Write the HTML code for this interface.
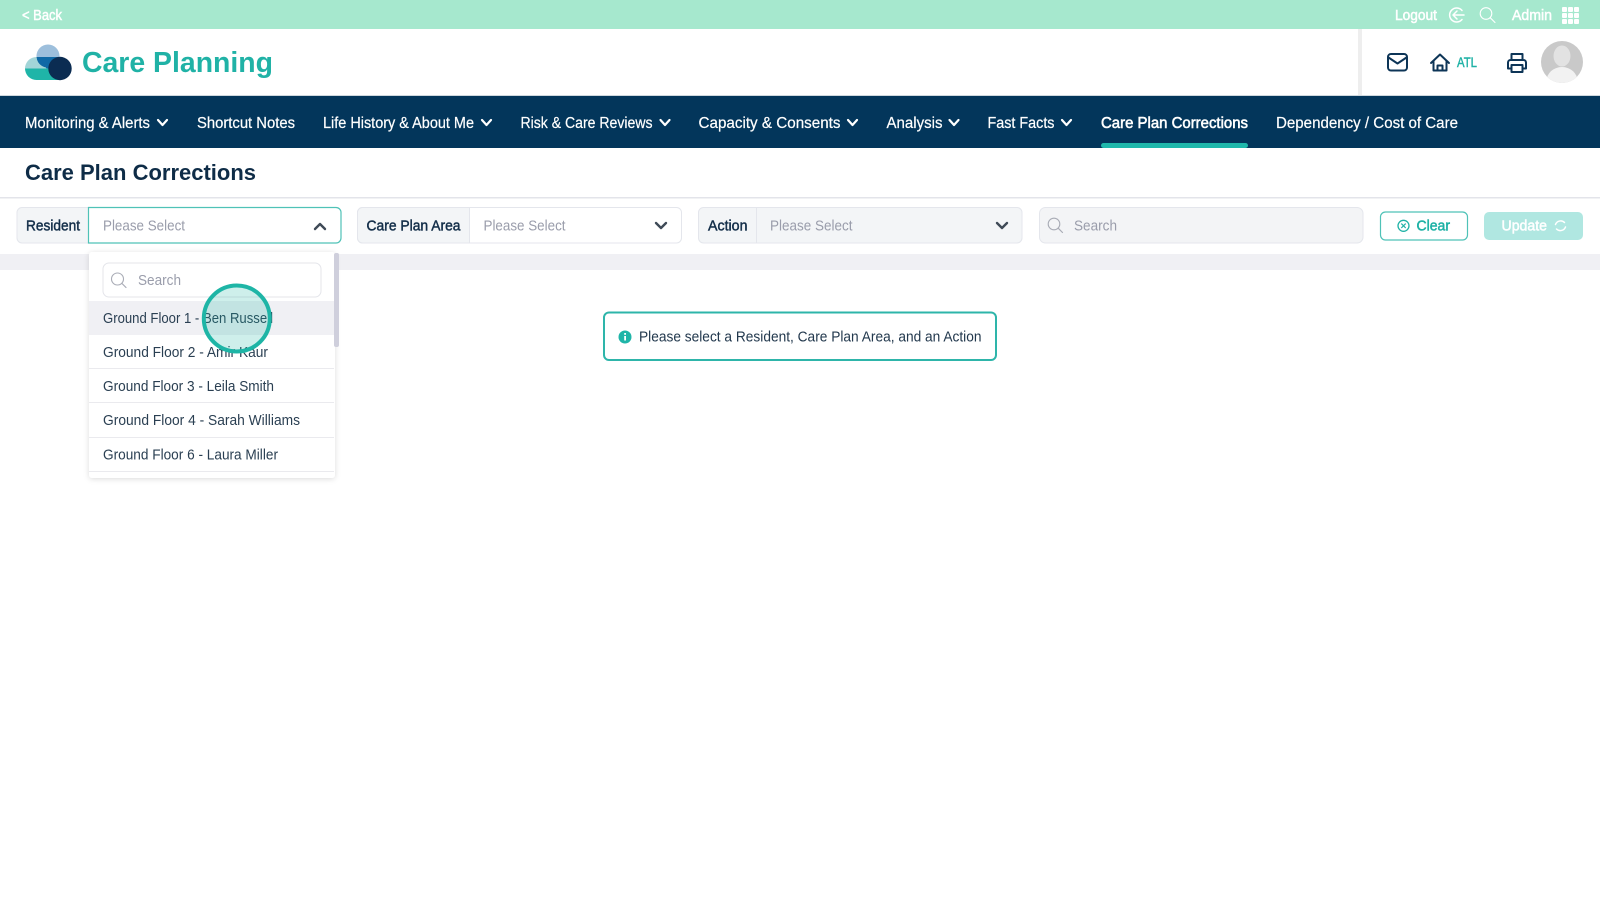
<!DOCTYPE html>
<html lang="en">
<head>
<meta charset="utf-8">
<title>Care Planning</title>
<style>
html,body{margin:0;padding:0;background:#fff;width:1600px;height:900px;overflow:hidden}
svg{display:block}
text{font-family:"Liberation Sans","DejaVu Sans",sans-serif}
</style>
</head>
<body>
<svg xmlns="http://www.w3.org/2000/svg" width="1600" height="900" viewBox="0 0 1600 900">
<defs>
<filter id="sh" x="-10%" y="-10%" width="120%" height="120%"><feDropShadow dx="0" dy="1" stdDeviation="3" flood-color="#000" flood-opacity=".14"/></filter>
<clipPath id="av"><circle cx="1562" cy="62" r="21"/></clipPath>
</defs>
<rect width="1600" height="900" fill="#fff"/>
<!-- top bar -->
<rect width="1600" height="29" fill="#a6e8ce"/>
<text x="22" y="20" font-size="14.500" fill="#fff" stroke="#fff" stroke-width=".5" textLength="40" lengthAdjust="spacingAndGlyphs">&lt; Back</text>
<text x="1395" y="20" font-size="14.500" fill="#fff" stroke="#fff" stroke-width=".5" textLength="42" lengthAdjust="spacingAndGlyphs">Logout</text>
<g fill="none" stroke="#fff" stroke-width="1.500" stroke-linecap="round" stroke-linejoin="round">
<path d="M1462 10.500A7 7 0 1 0 1462 19.500"/><path d="M1464 15H1453M1457 11L1453 15L1457 19"/>
</g>
<g fill="none" stroke="#fff" stroke-width="1.100" stroke-linecap="round">
<circle cx="1486" cy="13.500" r="5.800"/><path d="M1490.200 17.700L1495 22.500"/>
</g>
<text x="1512" y="20" font-size="14.500" fill="#fff" stroke="#fff" stroke-width=".5" textLength="40" lengthAdjust="spacingAndGlyphs">Admin</text>
<g fill="#fff">
<rect x="1562" y="7" width="5" height="5" rx="1"/><rect x="1568" y="7" width="5" height="5" rx="1"/><rect x="1574" y="7" width="5" height="5" rx="1"/>
<rect x="1562" y="13" width="5" height="5" rx="1"/><rect x="1568" y="13" width="5" height="5" rx="1"/><rect x="1574" y="13" width="5" height="5" rx="1"/>
<rect x="1562" y="19" width="5" height="5" rx="1"/><rect x="1568" y="19" width="5" height="5" rx="1"/><rect x="1574" y="19" width="5" height="5" rx="1"/>
</g>
<!-- header logo -->
<circle cx="48" cy="56" r="11.500" fill="#9dbfdc"/>
<path d="M36.500 57A11.500 11.500 0 0 0 59.500 57Z" fill="#0f69a6"/>
<path d="M25 68.500A11.500 11.500 0 0 1 36.500 57A11.500 11.500 0 0 0 46 67.500V68.500Z" fill="#a3d5d8"/>
<path d="M25 68.500H60V80H36.500A11.500 11.500 0 0 1 25 68.500Z" fill="#1fb5a8"/>
<circle cx="60" cy="68.500" r="11.700" fill="#0b2c52"/>
<text x="82" y="72" font-size="29" font-weight="700" fill="#20b2a6" textLength="191" lengthAdjust="spacingAndGlyphs">Care Planning</text>
<rect x="1358" y="29" width="4" height="66" fill="#eeeeee"/>
<g fill="none" stroke="#0d3557" stroke-width="2" stroke-linecap="round" stroke-linejoin="round">
<rect x="1388" y="54" width="19" height="16.500" rx="3"/><path d="M1388.500 57.500L1397.500 63.500L1406.500 57.500"/>
<path d="M1431 63L1440 54.500L1449 63M1433.500 61V70.500H1446.500V61M1437.500 70.500V65.500H1442.500V70.500"/>
<path d="M1511.500 60V54H1522.500V60M1511.500 68.500H1508V62.500A2.500 2.500 0 0 1 1510.500 60H1523.500A2.500 2.500 0 0 1 1526 62.500V68.500H1522.500"/><rect x="1511.500" y="65" width="11" height="7"/>
</g>
<text x="1457" y="67" font-size="14" fill="#20b2a6" stroke="#20b2a6" stroke-width=".45" textLength="20" lengthAdjust="spacingAndGlyphs">ATL</text>
<circle cx="1562" cy="62" r="21" fill="#c9c9c9"/>
<g clip-path="url(#av)"><ellipse cx="1562" cy="56" rx="8.500" ry="10.500" fill="#e2e2e2"/><ellipse cx="1562" cy="81" rx="15.500" ry="14" fill="#f2f2f2"/></g>
<!-- nav -->
<rect y="95" width="1600" height="1" fill="#cfd8de"/>
<rect y="96" width="1600" height="52" fill="#03365b"/>
<g font-size="15.500" fill="#fff" stroke="#fff" stroke-width=".2">
<text x="25" y="128" textLength="125" lengthAdjust="spacingAndGlyphs">Monitoring &amp; Alerts</text>
<text x="197" y="128" textLength="98" lengthAdjust="spacingAndGlyphs">Shortcut Notes</text>
<text x="323" y="128" textLength="151" lengthAdjust="spacingAndGlyphs">Life History &amp; About Me</text>
<text x="520.500" y="128" textLength="132" lengthAdjust="spacingAndGlyphs">Risk &amp; Care Reviews</text>
<text x="698.500" y="128" textLength="142" lengthAdjust="spacingAndGlyphs">Capacity &amp; Consents</text>
<text x="886.500" y="128" textLength="56" lengthAdjust="spacingAndGlyphs">Analysis</text>
<text x="987.500" y="128" textLength="67" lengthAdjust="spacingAndGlyphs">Fast Facts</text>
<text x="1101" y="128" textLength="147" lengthAdjust="spacingAndGlyphs" stroke-width=".55">Care Plan Corrections</text>
<text x="1276" y="128" textLength="182" lengthAdjust="spacingAndGlyphs">Dependency / Cost of Care</text>
</g>
<g fill="none" stroke="#fff" stroke-width="2.200" stroke-linecap="round" stroke-linejoin="round">
<path d="M158 120L162.500 125L167 120"/>
<path d="M482 120L486.500 125L491 120"/>
<path d="M660.500 120L665 125L669.500 120"/>
<path d="M848 120L852.500 125L857 120"/>
<path d="M949.500 120L954 125L958.500 120"/>
<path d="M1062 120L1066.500 125L1071 120"/>
</g>
<rect x="1101" y="143" width="147" height="5" rx="2.500" fill="#1fb8ab"/>
<!-- title -->
<text x="25" y="180" font-size="22.500" font-weight="700" fill="#0e2c47" textLength="231" lengthAdjust="spacingAndGlyphs">Care Plan Corrections</text>
<rect y="197" width="1600" height="1.500" fill="#e3e4ea"/>
<!-- band -->
<rect y="254" width="1600" height="16" fill="#f0f0f4"/>
<!-- resident -->
<path d="M89 207.500H22A5 5 0 0 0 17 212.500V238A5 5 0 0 0 22 243H89Z" fill="#f3f5f7" stroke="#e4e6ec"/>
<path d="M88.500 207.500H336A5 5 0 0 1 341 212.500V238A5 5 0 0 1 336 243H88.500Z" fill="#fff" stroke="#4fc2b7" stroke-width="1.200"/>
<text x="26" y="230.500" font-size="14.500" fill="#142f4a" stroke="#142f4a" stroke-width=".45" textLength="54" lengthAdjust="spacingAndGlyphs">Resident</text>
<text x="103" y="230.500" font-size="14.500" fill="#9a9dab" textLength="82" lengthAdjust="spacingAndGlyphs">Please Select</text>
<path d="M315 229L320 224L325 229" fill="none" stroke="#3f4a57" stroke-width="2.400" stroke-linecap="round" stroke-linejoin="round"/>
<!-- care plan area -->
<rect x="357.500" y="207.500" width="324" height="35.500" rx="5" fill="#fff" stroke="#e4e6ec"/>
<path d="M469.500 207.500H362.500A5 5 0 0 0 357.500 212.500V238A5 5 0 0 0 362.500 243H469.500Z" fill="#f3f5f7" stroke="#e4e6ec"/>
<text x="366.500" y="230.500" font-size="14.500" fill="#142f4a" stroke="#142f4a" stroke-width=".45" textLength="94" lengthAdjust="spacingAndGlyphs">Care Plan Area</text>
<text x="483.500" y="230.500" font-size="14.500" fill="#9a9dab" textLength="82" lengthAdjust="spacingAndGlyphs">Please Select</text>
<path d="M656 223L661 228L666 223" fill="none" stroke="#3f4a57" stroke-width="2.400" stroke-linecap="round" stroke-linejoin="round"/>
<!-- action -->
<rect x="698.500" y="207.500" width="323.500" height="35.500" rx="5" fill="#f3f5f7" stroke="#e4e6ec"/>
<rect x="756" y="208" width="1" height="35" fill="#e4e6ec"/>
<text x="708" y="230.500" font-size="14.500" fill="#142f4a" stroke="#142f4a" stroke-width=".45" textLength="39.500" lengthAdjust="spacingAndGlyphs">Action</text>
<text x="770" y="230.500" font-size="14.500" fill="#9a9dab" textLength="82.500" lengthAdjust="spacingAndGlyphs">Please Select</text>
<path d="M997 223L1002 228L1007 223" fill="none" stroke="#3f4a57" stroke-width="2.400" stroke-linecap="round" stroke-linejoin="round"/>
<!-- search -->
<rect x="1039.500" y="207.500" width="323.500" height="35.500" rx="6" fill="#f3f4f6" stroke="#e4e6ec"/>
<circle cx="1054" cy="224" r="5.800" fill="none" stroke="#a9acb6" stroke-width="1.100"/>
<path d="M1058.200 228.200L1062.500 232.500" stroke="#a9acb6" stroke-width="1.200" stroke-linecap="round"/>
<text x="1074" y="230.500" font-size="14.500" fill="#9a9dab" textLength="43" lengthAdjust="spacingAndGlyphs">Search</text>
<!-- clear -->
<rect x="1380.500" y="212" width="87" height="28" rx="5" fill="#fff" stroke="#4fc2b7" stroke-width="1.200"/>
<circle cx="1403.500" cy="225.800" r="5.500" fill="none" stroke="#20b2a6" stroke-width="1.300"/>
<path d="M1401.300 223.600L1405.700 228M1405.700 223.600L1401.300 228" stroke="#20b2a6" stroke-width="1.200"/>
<text x="1416.500" y="230.500" font-size="14.500" fill="#20b2a6" stroke="#20b2a6" stroke-width=".5" textLength="33.500" lengthAdjust="spacingAndGlyphs">Clear</text>
<!-- update -->
<rect x="1484" y="212" width="99" height="28" rx="5" fill="#b0e7e1"/>
<text x="1501.500" y="230.500" font-size="14.500" fill="#fff" stroke="#fff" stroke-width=".5" textLength="45.500" lengthAdjust="spacingAndGlyphs">Update</text>
<path d="M1555.500 224.500A5.500 5.500 0 0 1 1564.500 222.500M1565.500 227A5.500 5.500 0 0 1 1556.500 229" fill="none" stroke="#fff" stroke-width="1.500" stroke-linecap="round"/>
<!-- dropdown -->
<rect x="89" y="252" width="246" height="226" rx="3" fill="#fff" filter="url(#sh)"/>
<rect x="334" y="253" width="5" height="94" rx="2" fill="#cfcfdc"/>
<rect x="103" y="263" width="218" height="34" rx="6" fill="#fff" stroke="#e4e5ea"/>
<circle cx="117.500" cy="279" r="6" fill="none" stroke="#a9acb6" stroke-width="1.100"/>
<path d="M122 283.500L126 287.500" stroke="#a9acb6" stroke-width="1.200" stroke-linecap="round"/>
<text x="138" y="285" font-size="14.500" fill="#9a9dab" textLength="43" lengthAdjust="spacingAndGlyphs">Search</text>
<rect x="89" y="301" width="245" height="34" fill="#f0f0f4"/>
<g fill="#eaeaee">
<rect x="89" y="368" width="245" height="1"/>
<rect x="89" y="402" width="245" height="1"/>
<rect x="89" y="437" width="245" height="1"/>
<rect x="89" y="471" width="245" height="1"/>
</g>
<g font-size="14.500" fill="#2a3f52">
<text x="103" y="323" textLength="170" lengthAdjust="spacingAndGlyphs">Ground Floor 1 - Ben Russell</text>
<text x="103" y="357" textLength="165" lengthAdjust="spacingAndGlyphs">Ground Floor 2 - Amir Kaur</text>
<text x="103" y="391" textLength="171" lengthAdjust="spacingAndGlyphs">Ground Floor 3 - Leila Smith</text>
<text x="103" y="425" textLength="197" lengthAdjust="spacingAndGlyphs">Ground Floor 4 - Sarah Williams</text>
<text x="103" y="459.500" textLength="175" lengthAdjust="spacingAndGlyphs">Ground Floor 6 - Laura Miller</text>
</g>
<!-- cursor highlight -->
<circle cx="236.800" cy="318.500" r="33" fill="#1eb5a6" fill-opacity=".22" stroke="#1eb5a6" stroke-width="4"/>
<!-- alert -->
<rect x="604" y="312.500" width="392" height="47.500" rx="5" fill="#fff" stroke="#2eb5aa" stroke-width="2"/>
<circle cx="625" cy="337" r="6.500" fill="#1fb5a8"/>
<rect x="624.200" y="336" width="1.800" height="4.500" fill="#fff"/>
<rect x="624.200" y="333" width="1.800" height="1.800" fill="#fff"/>
<text x="639" y="341.500" font-size="14.500" fill="#22384d" textLength="342.500" lengthAdjust="spacingAndGlyphs">Please select a Resident, Care Plan Area, and an Action</text>
</svg>
</body>
</html>
